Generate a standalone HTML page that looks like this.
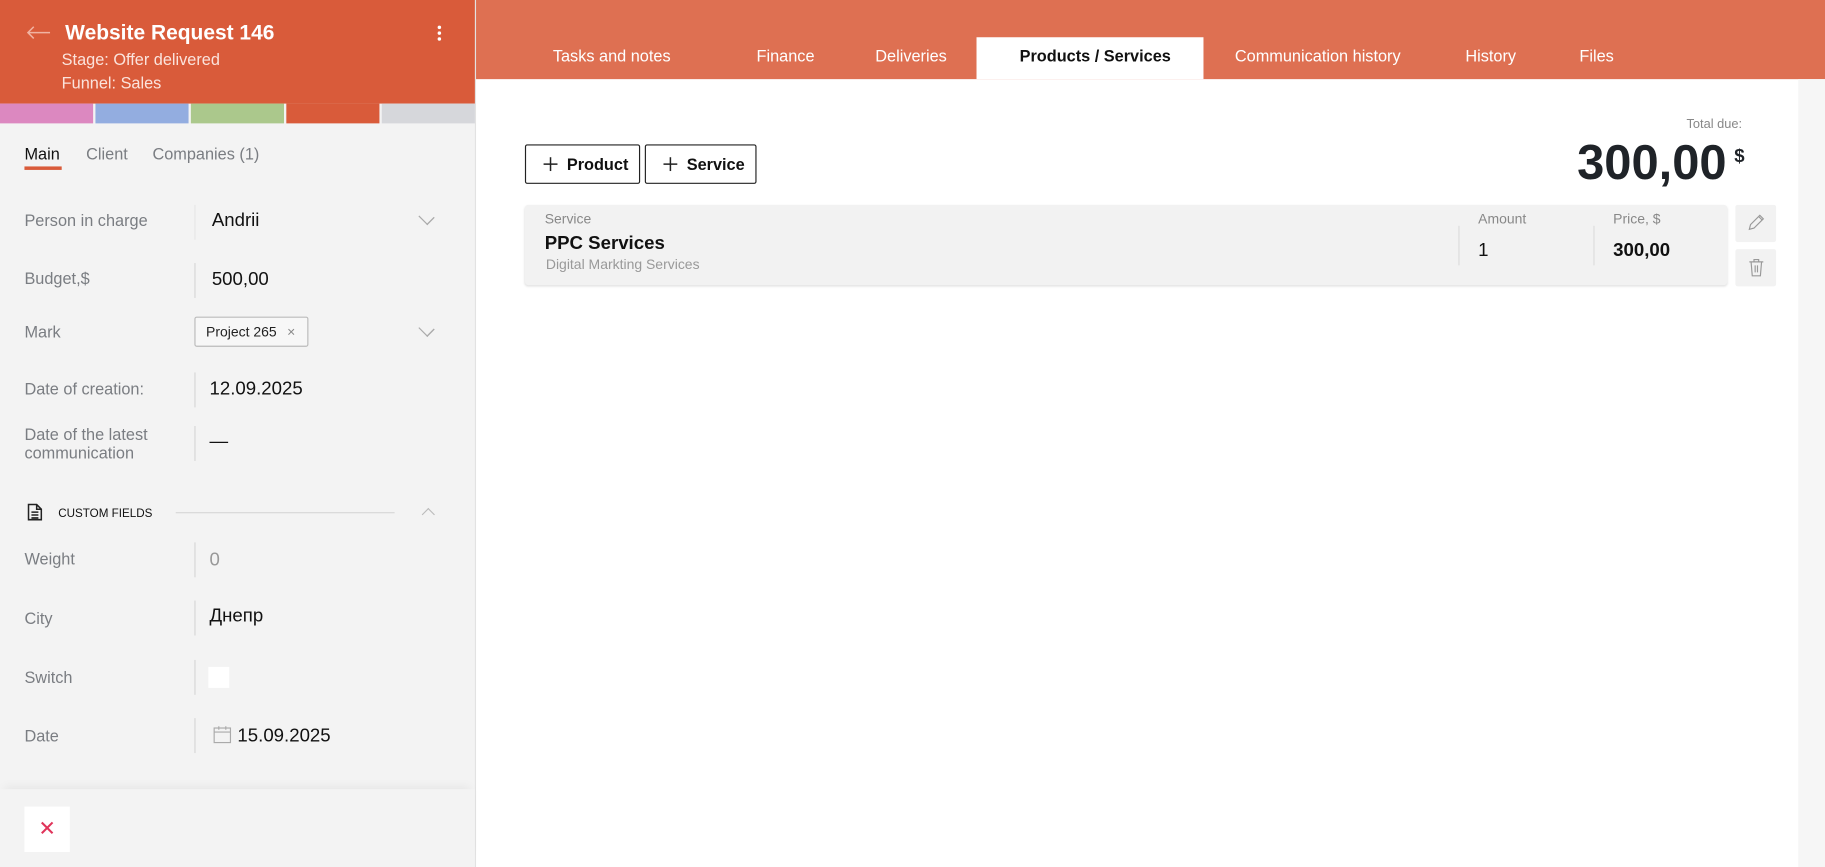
<!DOCTYPE html>
<html><head><meta charset="utf-8"><style>
html,body{margin:0;padding:0;width:1825px;height:867px;overflow:hidden;background:#fff}
#w{position:absolute;left:0;top:0;width:1568px;height:745px;transform:scale(1.16390);transform-origin:0 0;font-family:"Liberation Sans","DejaVu Sans",sans-serif;}
.a{position:absolute}
.lab{position:absolute;left:21px;font-size:14px;color:#7a7d82}
.val{position:absolute;font-size:16px;color:#111}
.sep{position:absolute;left:167px;width:1px;background:#d6d6d6}
.tab{position:absolute;top:40px;font-size:14px;color:#fff}
.btn{position:absolute;top:124px;height:32px;border:1px solid #222;border-radius:2px;font-size:14px;font-weight:bold;color:#111;display:flex;align-items:center;box-sizing:border-box;height:34px}
</style></head><body><div id="w">
<div class="a" style="left:0;top:0;width:408px;height:745px;background:#f3f3f3;border-right:1px solid #e2e2e2"></div>
<div class="a" style="left:0;top:0;width:408px;height:89px;background:#d95b3a"></div>
<svg class="a" style="left:22px;top:22px" width="22" height="12" viewBox="0 0 22 12"><path d="M21 6H2M7 1L2 6l5 5" fill="none" stroke="#f0b3a2" stroke-width="1.3"/></svg>
<div class="a" style="left:56px;top:18px;color:#fff;font-size:18px;font-weight:bold">Website Request 146</div>
<div class="a" style="left:53px;top:43px;color:#fbe3dc;font-size:14px">Stage: Offer delivered</div>
<div class="a" style="left:53px;top:63px;color:#fbe3dc;font-size:14px">Funnel: Sales</div>
<div class="a" style="left:376px;top:22px;width:3px;height:3px;background:#fff;border-radius:2px;box-shadow:0 5px 0 #fff,0 10px 0 #fff"></div>
<div class="a" style="left:0;top:89px;width:80px;height:17px;background:#dc88c0"></div>
<div class="a" style="left:82px;top:89px;width:80px;height:17px;background:#93ade0"></div>
<div class="a" style="left:164px;top:89px;width:80px;height:17px;background:#abc88c"></div>
<div class="a" style="left:246px;top:89px;width:80px;height:17px;background:#d95b3a"></div>
<div class="a" style="left:328px;top:89px;width:80px;height:17px;background:#d6d7db"></div>
<div class="a" style="left:21px;top:124px;font-size:14px;color:#111">Main</div>
<div class="a" style="left:21px;top:143px;width:32px;height:3px;background:#d95b3a"></div>
<div class="a" style="left:74px;top:124px;font-size:14px;color:#7a7d82">Client</div>
<div class="a" style="left:131px;top:124px;font-size:14px;color:#7a7d82">Companies (1)</div>

<div class="lab" style="top:181px">Person in charge</div><div class="sep" style="top:176px;height:30px;background:#e6e6e6"></div>
<div class="val" style="left:182px;top:181px">Andrii</div>
<div class="a" style="left:362px;top:182px;width:8px;height:8px;border-right:1px solid #aaa;border-bottom:1px solid #aaa;transform:rotate(45deg) scaleX(1.2)"></div>
<div class="lab" style="top:231px">Budget,$</div><div class="sep" style="top:226px;height:30px"></div>
<div class="val" style="left:182px;top:232px">500,00</div>
<div class="lab" style="top:277px">Mark</div>
<div class="a" style="left:167px;top:272px;width:96px;height:24px;border:1px solid #bbb;border-radius:2px;background:#f7f7f7;font-size:12px;line-height:24px;color:#222"><span style="margin-left:9px">Project 265</span><span style="margin-left:9px;color:#888">×</span></div>
<div class="a" style="left:362px;top:278px;width:8px;height:8px;border-right:1px solid #aaa;border-bottom:1px solid #aaa;transform:rotate(45deg) scaleX(1.2)"></div>
<div class="lab" style="top:326px">Date of creation:</div><div class="sep" style="top:320px;height:30px"></div>
<div class="val" style="left:180px;top:326px">12.09.2025</div>
<div class="lab" style="top:365px;line-height:16px">Date of the latest<br>communication</div><div class="sep" style="top:366px;height:30px"></div>
<div class="val" style="left:180px;top:371px">—</div>

<svg class="a" style="left:23px;top:432px" width="14" height="16" viewBox="0 0 14 16"><path d="M1.5 1.5h7l4 4v9h-11z M8.5 1.5v4h4 M4 8h6M4 10.5h6M4 13h6" fill="none" stroke="#222" stroke-width="1.3"/></svg>
<div class="a" style="left:50px;top:436px;font-size:10px;color:#111">CUSTOM FIELDS</div>
<div class="a" style="left:151px;top:440px;width:188px;height:1px;background:#d6d6d6"></div>
<div class="a" style="left:364px;top:438px;width:7px;height:7px;border-left:1px solid #bbb;border-top:1px solid #bbb;transform:rotate(45deg)"></div>
<div class="lab" style="top:472px">Weight</div><div class="sep" style="top:466px;height:30px"></div>
<div class="val" style="left:180px;top:473px;color:#999">0</div>
<div class="lab" style="top:523px">City</div><div class="sep" style="top:516px;height:30px"></div>
<div class="val" style="left:180px;top:521px">Днепр</div>
<div class="lab" style="top:574px">Switch</div><div class="sep" style="top:567px;height:30px"></div>
<div class="a" style="left:179px;top:573px;width:18px;height:18px;background:#fff"></div>
<div class="lab" style="top:624px">Date</div><div class="sep" style="top:617px;height:30px"></div>
<svg class="a" style="left:183px;top:623px" width="16" height="16" viewBox="0 0 16 16"><rect x="1" y="2.5" width="14" height="12.5" fill="none" stroke="#aaa"/><path d="M1 6h14M5 1v3M11 1v3" stroke="#aaa"/></svg>
<div class="val" style="left:204px;top:624px">15.09.2025</div>
<div class="a" style="left:0;top:678px;width:408px;height:67px;background:#f3f3f3;box-shadow:0 -6px 8px -4px rgba(0,0,0,.06)"></div>
<div class="a" style="left:21px;top:693px;width:39px;height:39px;background:#fff;color:#e0345a;font-size:18px;text-align:center;line-height:38px">✕</div>

<div class="a" style="left:409px;top:0;width:1159px;height:68px;background:#de7052"></div>
<div class="tab" style="left:475px">Tasks and notes</div>
<div class="tab" style="left:650px">Finance</div>
<div class="tab" style="left:752px">Deliveries</div>
<div class="a" style="left:839px;top:32px;width:195px;height:36px;background:#fff"></div>
<div class="tab" style="left:876px;color:#111;font-weight:bold">Products / Services</div>
<div class="tab" style="left:1061px">Communication history</div>
<div class="tab" style="left:1259px">History</div>
<div class="tab" style="left:1357px">Files</div>
<div class="a" style="left:1545px;top:68px;width:23px;height:677px;background:#f6f6f6"></div>

<div class="btn" style="left:451px;width:99px"><svg style="margin:0 8px 0 15px" width="12" height="12" viewBox="0 0 12 12"><path d="M6 0v12M0 6h12" stroke="#222" stroke-width="1.3"/></svg>Product</div>
<div class="btn" style="left:554px;width:96px"><svg style="margin:0 8px 0 15px" width="12" height="12" viewBox="0 0 12 12"><path d="M6 0v12M0 6h12" stroke="#222" stroke-width="1.3"/></svg>Service</div>
<div class="a" style="left:1449px;top:101px;font-size:11px;color:#888">Total due:</div>
<div class="a" style="left:1355px;top:116px;font-size:42px;font-weight:bold;color:#1f2328">300,00</div>
<div class="a" style="left:1490px;top:126px;font-size:16px;font-weight:bold;color:#1f2328">$</div>

<div class="a" style="left:451px;top:176px;width:1033px;height:69px;background:#f2f2f2;border-radius:3px;box-shadow:0 1px 2px rgba(0,0,0,.12)"></div>
<div class="a" style="left:468px;top:181px;font-size:12px;color:#888">Service</div>
<div class="a" style="left:468px;top:201px;font-size:16px;font-weight:bold;color:#111">PPC Services</div>
<div class="a" style="left:469px;top:220px;font-size:12px;color:#999">Digital Markting Services</div>
<div class="a" style="left:1253px;top:194px;width:1px;height:34px;background:#ddd"></div>
<div class="a" style="left:1270px;top:181px;font-size:12px;color:#888">Amount</div>
<div class="a" style="left:1270px;top:207px;font-size:16px;color:#111">1</div>
<div class="a" style="left:1369px;top:194px;width:1px;height:34px;background:#ddd"></div>
<div class="a" style="left:1386px;top:181px;font-size:12px;color:#888">Price, $</div>
<div class="a" style="left:1386px;top:207px;font-size:16px;font-weight:bold;color:#111">300,00</div>
<div class="a" style="left:1491px;top:176px;width:35px;height:32px;background:#f2f2f2;border-radius:2px"></div>
<svg class="a" style="left:1501px;top:183px" width="16" height="16" viewBox="0 0 16 16"><path d="M2 14l1-4 8-8 3 3-8 8z M10 3l3 3" fill="none" stroke="#999" stroke-width="1"/></svg>
<div class="a" style="left:1491px;top:214px;width:35px;height:32px;background:#f2f2f2;border-radius:2px"></div>
<svg class="a" style="left:1501px;top:221px" width="16" height="18" viewBox="0 0 16 18"><path d="M2 4h12M6 4V2h4v2M3.5 4l1 12h7l1-12M7 7v6M9 7v6" fill="none" stroke="#999" stroke-width="1"/></svg>
</div></body></html>
